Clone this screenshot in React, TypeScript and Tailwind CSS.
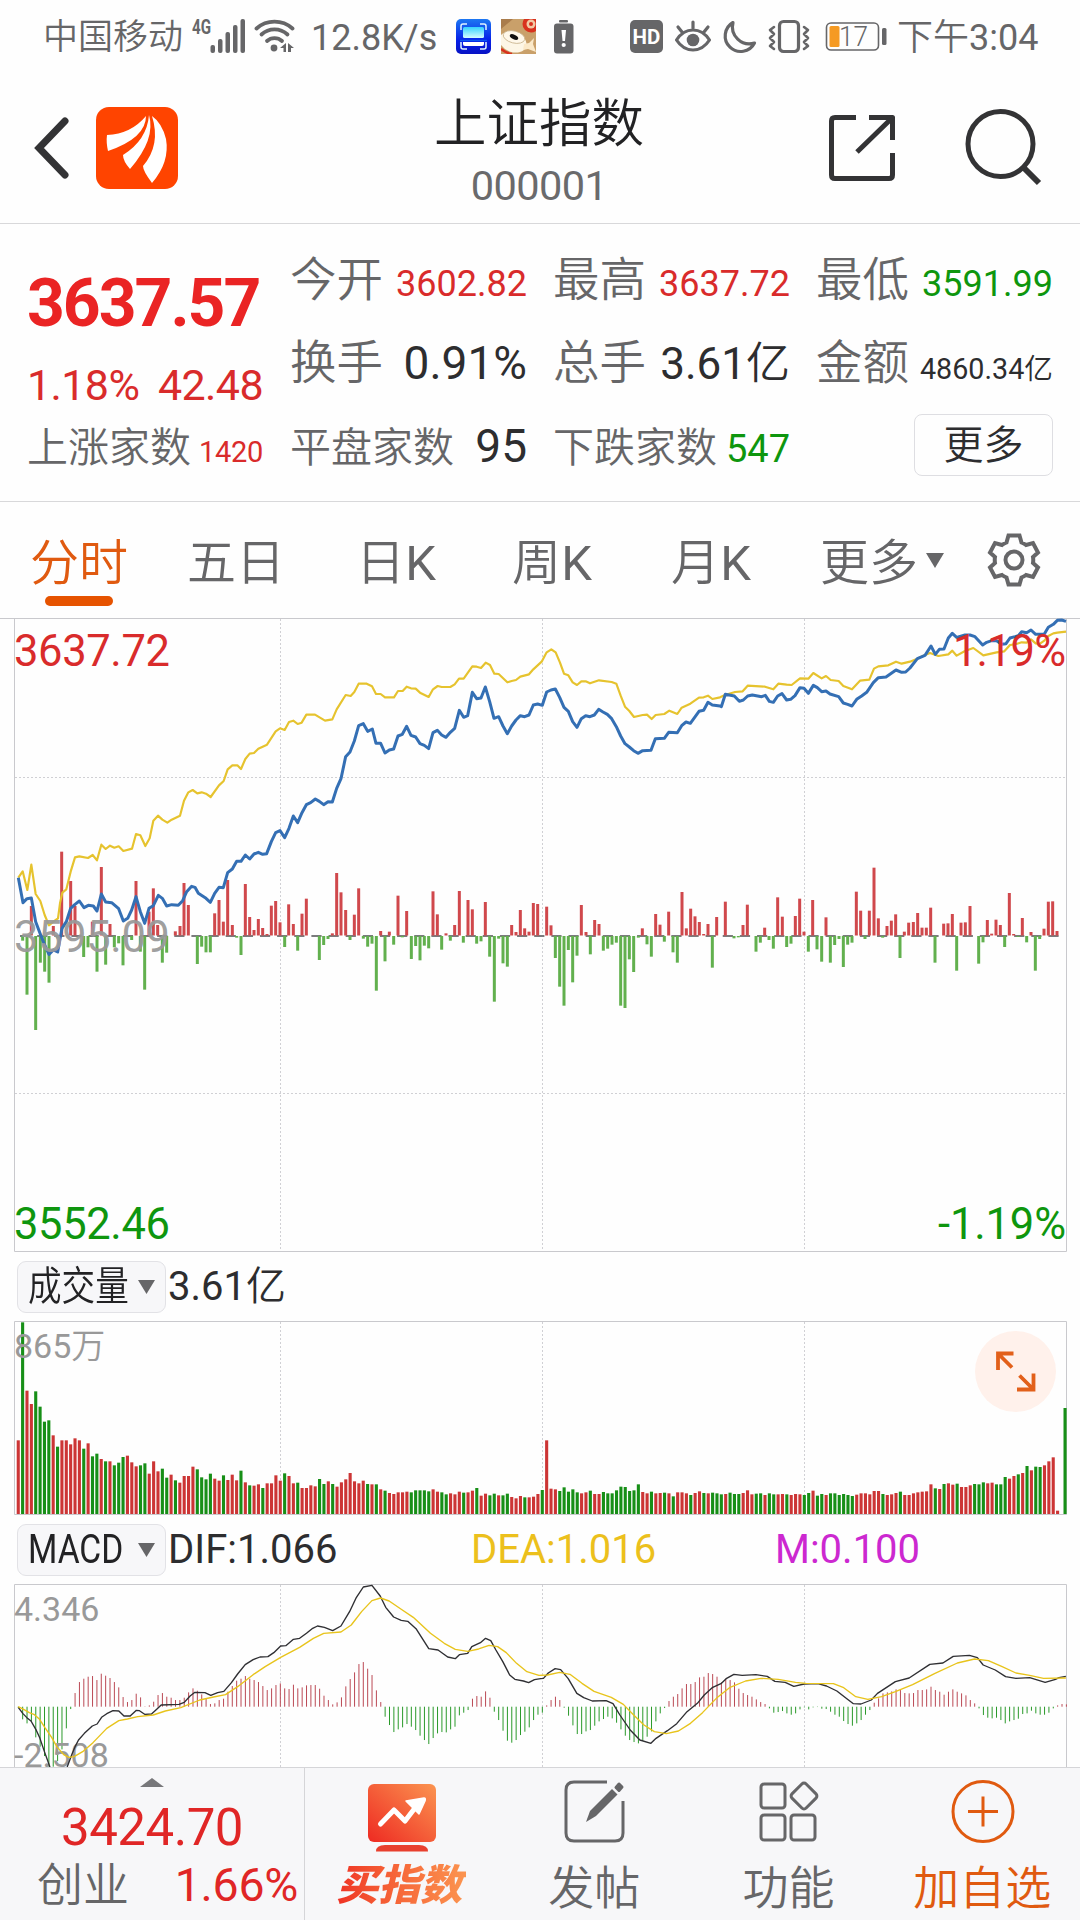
import React from 'react'

const RED = '#d92b2b'
const GREEN = '#0e960e'

// one sample per trading minute
const STEP = 4.367
const FIRST_X = 18.3

const priceLine =
  '55,803 69,878 81,866 94,864 107,935 120,970 131,998 147,1033 160,1020 173,1026 186,955 199,935 212,895 225,883 238,873 252,893 265,886 280,888 291,903 304,852 317,876 335,878 356,896 370,933 383,925 395,900 408,860 421,905 434,940 447,895 460,887 475,856 487,865 500,888 515,884 535,886 548,872 560,845 575,829 585,832 595,850 618,865 631,877 644,850 657,832 670,833 683,788 697,777 710,754 723,754 736,735 749,747 762,732 775,727 788,733 800,731 814,695 827,668 840,662 854,683 867,655 880,618 893,638 906,608 919,584 932,578 946,567 958,574 971,584 984,575 997,576 1010,535 1023,506 1037,440 1050,426 1063,393 1076,347 1090,341 1103,364 1117,357 1128,400 1142,400 1155,429 1168,420 1181,417 1194,378 1207,373 1220,349 1233,376 1247,381 1260,401 1273,406 1286,416 1299,368 1312,361 1325,375 1338,382 1351,367 1364,355 1378,301 1391,322 1403,317 1417,247 1430,266 1443,264 1456,231 1469,275 1482,325 1496,320 1509,348 1522,371 1535,348 1548,330 1561,317 1574,320 1587,315 1600,285 1613,282 1627,286 1640,246 1653,240 1666,237 1679,262 1692,292 1705,304 1718,335 1731,352 1744,326 1757,317 1770,320 1783,315 1796,298 1809,306 1822,313 1835,326 1849,350 1862,378 1875,401 1888,411 1901,422 1914,430 1928,422 1953,421 1966,386 1993,385 2006,367 2032,368 2045,347 2058,336 2071,340 2084,322 2097,304 2111,301 2124,277 2137,285 2160,288 2164,290 2176,253 2203,258 2218,274 2230,270 2243,258 2257,255 2285,260 2296,256 2308,274 2320,277 2333,258 2346,251 2360,270 2372,268 2385,257 2400,233 2412,235 2425,250 2440,226 2452,233 2465,245 2478,243 2490,252 2516,260 2530,279 2543,283 2556,288 2570,268 2585,258 2600,247 2620,218 2635,203 2658,201 2688,180 2705,187 2717,186 2730,174 2752,146 2775,136 2793,108 2806,133 2818,118 2832,117 2845,84 2857,70 2870,82 2895,75 2910,75 2925,80 2948,105 2960,97 2975,92 2990,92 3005,103 3018,101 3030,84 3045,80 3055,77 3065,65 3080,68 3093,60 3107,73 3133,72 3145,52 3160,43 3172,31 3185,30 3198,34'

const averageLine =
  '55,803 68,784 82,840 94,764 107,852 121,873 134,915 147,946 160,935 174,925 180,880 187,848 199,838 212,785 225,742 238,739 264,744 278,735 291,751 304,704 317,717 330,707 343,713 356,709 370,723 396,716 408,672 421,676 436,708 449,685 460,632 474,617 487,629 502,638 515,629 540,617 552,572 565,547 578,540 592,550 605,547 618,551 632,561 657,526 671,513 683,478 697,466 712,466 723,477 736,447 749,431 762,429 775,416 801,404 827,364 840,355 854,360 867,336 880,332 893,342 905,338 919,314 945,314 975,332 997,328 1010,298 1037,255 1052,258 1063,246 1076,221 1100,221 1116,229 1128,252 1142,252 1155,262 1182,262 1194,243 1208,243 1220,230 1233,235 1247,236 1260,248 1286,261 1299,238 1313,228 1325,231 1351,231 1364,223 1377,206 1391,206 1417,169 1430,170 1443,174 1457,158 1470,165 1483,191 1496,192 1522,217 1535,213 1548,210 1561,200 1587,193 1600,178 1625,155 1640,127 1654,118 1667,127 1680,158 1692,191 1705,196 1718,217 1731,225 1744,214 1757,214 1770,220 1797,211 1835,216 1849,221 1862,257 1875,290 1888,303 1902,321 1928,315 1941,314 1955,327 1967,315 1993,312 2008,302 2032,312 2045,293 2071,281 2097,263 2111,262 2124,257 2137,267 2160,262 2175,255 2205,246 2228,244 2243,227 2295,230 2320,238 2335,221 2360,224 2375,225 2400,205 2425,206 2440,189 2465,205 2478,198 2492,210 2516,213 2530,228 2556,238 2580,212 2608,209 2622,176 2635,169 2665,166 2688,155 2705,161 2730,155 2752,146 2775,135 2790,129 2815,138 2845,133 2857,122 2870,137 2895,123 2920,114 2950,136 2990,127 3013,124 3030,105 3045,103 3065,97 3080,98 3093,88 3107,100 3120,101 3133,92 3145,78 3160,70 3172,68 3198,65'

// bars round the previous close: x and the y of the bar's free end
const deltaBars: [number, number][] = [
  [94, 888], [160, 948], [185, 725], [212, 813], [225, 888], [277, 935], [304, 771], [330, 942], [408, 813], [447, 905],
  [460, 835], [473, 945], [526, 964], [540, 948], [552, 819], [565, 885], [644, 910], [657, 870], [670, 935], [683, 810],
  [697, 945], [736, 822], [749, 921], [762, 960], [775, 927], [788, 954], [801, 972], [814, 887], [827, 873], [840, 937],
  [866, 883], [880, 942], [906, 911], [919, 866], [997, 970], [1010, 789], [1023, 847], [1037, 900], [1063, 914], [1076, 835],
  [68, 992], [81, 1154], [107, 1260], [121, 1058], [134, 1085], [147, 1118], [173, 985], [251, 1041], [264, 1012], [291, 1085],
  [317, 1064], [343, 1012], [356, 1000], [369, 1066], [395, 990], [421, 1025], [434, 1139], [487, 1058], [500, 1028], [592, 1062],
  [605, 1010], [618, 1027], [631, 1027], [710, 983], [723, 1035], [854, 1011], [893, 1022], [958, 1050], [971, 1005], [984, 987],
  [1050, 990], [1142, 963], [1168, 965], [1194, 857], [1220, 903], [1299, 844], [1312, 913], [1338, 970], [1364, 945], [1378, 843],
  [1404, 870], [1417, 898], [1456, 876], [1535, 945], [1548, 966], [1561, 900], [1574, 955], [1587, 965], [1600, 879], [1613, 882],
  [1640, 890], [1653, 946], [1744, 885], [1758, 966], [1784, 930], [1797, 942], [1927, 955], [1967, 912], [1980, 944], [2006, 905],
  [2046, 846], [2059, 955], [2072, 896], [2085, 919], [2098, 936], [2111, 972], [2124, 942], [2150, 921], [1090, 986], [1103, 1010],
  [1116, 1001], [1129, 1142], [1155, 1054], [1181, 1004], [1207, 982], [1234, 1047], [1247, 1008], [1260, 1051], [1273, 1007], [1286, 1015],
  [1325, 1019], [1351, 992], [1390, 998], [1430, 1001], [1443, 994], [1469, 1040], [1483, 1175], [1496, 986], [1509, 1060], [1522, 1070],
  [1666, 1044], [1679, 1130], [1692, 1187], [1705, 1020], [1718, 1117], [1731, 1037], [1771, 1033], [1810, 1022], [1823, 1016], [1836, 1004],
  [1849, 998], [1862, 1187], [1875, 1194], [1888, 1048], [1901, 1086], [1915, 983], [1941, 1003], [1954, 1040], [1993, 995], [2019, 1027],
  [2032, 1058], [2137, 1073], [2176, 875], [2229, 945], [2242, 884], [2294, 953], [2333, 862], [2347, 920], [2386, 918], [2399, 866],
  [2412, 965], [2438, 870], [2478, 922], [2569, 845], [2582, 902], [2608, 902], [2622, 773], [2635, 925], [2661, 948], [2674, 932],
  [2687, 913], [2713, 965], [2726, 938], [2740, 936], [2753, 909], [2766, 953], [2779, 953], [2792, 893], [2831, 941], [2844, 940],
  [2857, 912], [2883, 938], [2896, 937], [2910, 888], [2962, 930], [2975, 971], [2988, 929], [3001, 945], [3028, 849], [3041, 972],
  [3067, 924], [3093, 966], [3132, 956], [3145, 875], [3158, 874], [3171, 963], [2202, 985], [2215, 982], [2268, 1025], [2281, 998],
  [2307, 990], [2320, 1016], [2360, 1011], [2373, 1001], [2425, 1025], [2451, 1018], [2465, 1055], [2491, 1058], [2504, 1005], [2517, 987],
  [2530, 1071], [2543, 1004], [2556, 998], [2595, 987], [2648, 983], [2700, 1044], [2805, 1058], [2870, 1082], [2936, 1061], [2949, 997],
  [3014, 1011], [3054, 981], [3080, 997], [3106, 1082], [3119, 987],
]

// turnover per minute, negative when the minute closed lower
const volumes = [
  221, -575, 370, 330, -368, -322, -277, -281, 236, -202, 221, 221, 209, 227, 221, -196, 212, -173, -181, 165,
  -158, 158, -146, -154, -171, 175, 155, 143, -146, -152, 121, 158, 128, -136, -109, 118, -101, 94, 114, 114,
  142, -134, -110, -104, -121, 106, 100, -116, 102, 118, 101, -130, 95, -86, 85, 89, -78, 92, 92, 116,
  100, -122, 114, 92, -94, 78, 78, 86, 83, -105, -90, 98, -90, 82, 95, 104, 123, 98, 92, 100,
  -90, 89, -89, 74, -70, 63, 60, 65, 65, 67, -65, -71, -71, -71, -68, 74, 67, -65, -59, 62,
  59, 67, -64, 65, 70, -78, 55, 61, -56, -61, 56, -56, -61, 51, 47, 54, -50, 50, 52, 60,
  -72, 221, 76, 74, -69, -80, -67, -74, -65, 62, 65, -70, 60, 60, -66, -62, -62, -71, -82, -81,
  -69, -71, -89, 66, 62, -67, 62, 63, -64, 62, -53, 65, 65, 62, -57, 63, 68, -63, 62, -64,
  -62, -59, 60, -64, -60, -60, 63, 71, 59, -61, -62, 57, -62, -59, 59, 60, -59, 57, 60, 59,
  -57, -63, 70, -55, -60, 57, -62, -62, -57, -60, -57, -54, 58, 62, 62, 59, 69, 69, -60, 57,
  59, 63, -67, 57, 57, 62, 65, 67, 68, 89, -77, 75, -90, 92, 88, -91, 81, 81, 86, -90,
  -89, -95, 92, 94, -89, -89, -111, 106, 114, -119, 123, -144, 131, -142, -141, 146, 158, 170, 10, 0,
  -318,
]

const macdBars = [
  -3, -38, -50, -45, -92, -120, -148, -180, -180, -163, -128, -65, -7, 41, 74, 84, 90, 92, 80, 99,
  93, 86, 74, 58, 29, 14, 20, 39, 28, 1, 4, 15, 35, 41, 30, 27, 20, 20, 27, 43,
  55, 48, 37, 23, 8, 10, 20, 24, 45, 62, 78, 84, 92, 84, 80, 74, 62, 50, 55, 65,
  70, 55, 53, 66, 55, 58, 64, 65, 65, 54, 33, 20, 7, 13, 28, 61, 83, 103, 128, 134,
  114, 95, 49, 14, -30, -55, -76, -68, -62, -52, -60, -70, -87, -100, -112, -94, -80, -76, -77, -68,
  -60, -26, -18, -10, 24, 32, 30, 46, 27, -15, -40, -72, -102, -108, -100, -85, -75, -62, -40, -24,
  -18, 4, 20, 30, 20, -3, -27, -56, -82, -82, -74, -70, -57, -44, -37, -30, -35, -48, -68, -87,
  -100, -106, -110, -102, -90, -74, -44, -20, -4, 17, 30, 38, 55, 68, 68, 74, 88, 90, 101, 98,
  90, 73, 84, 80, 73, 54, 41, 35, 30, 22, 14, 8, -5, -18, -16, -13, -20, -24, -20, -8,
  -2, -8, -2, -1, -6, -7, -15, -24, -30, -43, -52, -57, -50, -40, -24, -10, 12, 25, 40, 43,
  46, 52, 52, 41, 40, 41, 50, 50, 52, 60, 50, 45, 36, 45, 52, 45, 40, 34, 20, 10,
  -5, -25, -33, -35, -33, -40, -50, -44, -40, -36, -22, -20, -12, -20, -24, -24, -18, -5, 4, 8,
  7,
]

const difLine =
  '53,562 66,580 78,593 90,603 104,628 116,655 129,695 145,741 158,775 178,775 195,741 210,700 218,680 228,660 245,640 268,618 282,612 295,592 310,581 328,572 345,573 360,588 378,588 396,571 405,572 420,583 440,582 455,568 468,555 520,553 535,547 552,528 566,517 595,518 612,526 632,518 650,514 672,488 690,462 712,434 735,419 755,411 778,410 795,398 815,378 830,377 852,358 870,355 890,340 908,325 922,318 942,322 966,332 990,318 1015,275 1035,232 1055,201 1080,196 1104,228 1120,262 1143,291 1165,301 1184,304 1208,326 1245,386 1272,390 1300,411 1322,416 1334,404 1358,400 1370,380 1395,368 1410,355 1425,362 1440,390 1460,425 1480,465 1495,478 1520,483 1535,488 1552,479 1570,476 1578,475 1592,459 1612,446 1628,449 1650,476 1675,520 1695,533 1720,543 1760,542 1780,551 1800,585 1830,630 1858,660 1890,670 1905,655 1938,632 1965,611 1995,575 2025,550 2045,525 2068,503 2095,490 2110,475 2131,463 2155,466 2195,464 2228,469 2250,484 2280,487 2305,499 2335,492 2375,491 2400,498 2430,513 2460,537 2478,551 2500,552 2530,540 2548,520 2600,485 2640,474 2700,433 2738,429 2768,409 2815,406 2838,413 2855,435 2890,450 2920,470 2950,475 2990,473 3035,487 3065,478 3075,473 3095,469'

const deaLine =
  '53,560 70,569 85,578 100,584 115,598 130,622 150,652 165,680 185,704 200,712 215,710 240,695 270,668 310,625 345,602 370,597 400,590 445,585 480,573 525,563 580,540 620,531 655,524 690,500 735,464 770,440 815,412 870,382 910,355 940,340 990,336 1020,315 1050,275 1080,242 1105,234 1130,243 1165,268 1200,292 1250,340 1290,370 1322,388 1358,394 1390,387 1420,376 1445,380 1470,398 1500,430 1530,455 1565,466 1590,465 1625,457 1655,463 1690,490 1725,514 1775,532 1810,553 1840,585 1870,615 1900,635 1935,641 1970,633 2005,610 2040,578 2080,535 2120,502 2165,483 2210,475 2260,478 2310,487 2340,490 2420,491 2450,503 2485,530 2520,538 2560,530 2600,515 2650,494 2715,460 2780,429 2830,417 2870,422 2910,440 2950,459 2990,466 3030,475 3095,474'

const quotes = [
  [
    { label: '今开', value: '3602.82', style: 'text-[36px] text-[#d92b2b]' },
    { label: '最高', value: '3637.72', style: 'text-[36px] text-[#d92b2b]' },
    { label: '最低', value: '3591.99', style: 'text-[36px] text-[#0e960e]' },
  ],
  [
    { label: '换手', value: '0.91%', style: 'text-[46px] text-[#2d2d2f]' },
    { label: '总手', value: '3.61', unit: '亿', style: 'text-[44px] text-[#2d2d2f]' },
    { label: '金额', value: '4860.34', unit: '亿', style: 'text-[28.700px] text-[#2d2d2f]' },
  ],
]

const GridLines = ({ height }: { height: number }) => (
  <g stroke="#d0d0d4" strokeWidth="1" strokeDasharray="2 2">
    {[280.5, 542.5, 804.5].map((x) => (
      <line key={x} x1={x} x2={x} y1={0} y2={height} />
    ))}
  </g>
)

const StatusBar = () => (
  <div className="flex h-[72px] shrink-0 items-center pl-[43px] text-[35px] leading-none text-[#666668]">
    <span className="w-[147px] whitespace-nowrap pt-[3px] font-[350]">中国移动</span>
    <svg width="110" height="72" viewBox="190 0 110 72" fill="#666668">
      <text x="192" y="34" fontSize="20" fontWeight="700" textLength="19" lengthAdjust="spacingAndGlyphs">4G</text>
      <rect x="210.500" y="45" width="4.500" height="8" rx="2" />
      <rect x="218" y="39" width="4.500" height="14" rx="2" />
      <rect x="225.500" y="32" width="4.500" height="21" rx="2" />
      <rect x="233" y="25" width="4.500" height="28" rx="2" />
      <rect x="240.500" y="19" width="4.500" height="34" rx="2" />
      <g fill="none" stroke="#666668" strokeWidth="3.800" strokeLinecap="round">
        <path d="M256.500 28.500a27 27 0 0 1 36 0" />
        <path d="M261.500 34.500a19 19 0 0 1 26 0" />
        <path d="M267 41a11 11 0 0 1 15 0" />
      </g>
      <circle cx="274" cy="48" r="3.400" />
      <path d="M280 48l6-5v9h-2.500v-4zM288 43l6 5h-3v4h-3z" />
    </svg>
    <span className="ml-[11px] w-[126px] whitespace-nowrap pt-[3px] text-[36px]">12.8K/s</span>
    <svg className="ml-[19px]" width="120" height="72" viewBox="456 0 120 72">
      <defs>
        <linearGradient id="scan" x1="0" x2="0" y1="0" y2="1">
          <stop offset="0" stopColor="#1d78f2" />
          <stop offset="0.600" stopColor="#0620e8" />
          <stop offset="1" stopColor="#0712c4" />
        </linearGradient>
        <linearGradient id="page" x1="0" x2="0" y1="0" y2="1">
          <stop offset="0" stopColor="#35d3ff" />
          <stop offset="1" stopColor="#d5fbff" />
        </linearGradient>
        <clipPath id="catClip">
          <rect x="501" y="19" width="35" height="35" />
        </clipPath>
      </defs>
      <rect x="456" y="19" width="35" height="35" rx="5" fill="url(#scan)" />
      <path d="M461 30v-4q0-2 2-2h4M480 24h4q2 0 2 2v4M461 42v5q0 2 2 2h4M480 49h4q2 0 2-2v-5" fill="none" stroke="#dff4ff" strokeWidth="1.500" />
      <rect x="463" y="27" width="21" height="11" rx="1.500" fill="url(#page)" />
      <path d="M460 40.500h27" stroke="#0a56f0" strokeWidth="1.500" />
      <path d="M463 42h21v2q0 2-2 2h-17q-2 0-2-2z" fill="#fff" />
      <g clipPath="url(#catClip)">
        <rect x="501" y="19" width="35" height="35" fill="#c9a06a" />
        <path d="M501 19h12l-12 10z" fill="#a97c4c" />
        <circle cx="531" cy="24" r="8.500" fill="#d8321e" />
        <circle cx="531" cy="24" r="4.500" fill="#f2c9a4" />
        <circle cx="531" cy="24" r="2" fill="#d8321e" />
        <ellipse cx="513" cy="42" rx="14" ry="10" transform="rotate(20 513 42)" fill="#fdf6e6" />
        <path d="M524 44l5-1 5-5-1 6 3 8-8-3-5 1z" fill="#fbe9c9" />
        <ellipse cx="514" cy="37" rx="11" ry="6" transform="rotate(14 514 37)" fill="#fff8ea" stroke="#c8b28c" strokeWidth="0.800" />
        <ellipse cx="514" cy="37" rx="4.500" ry="2.300" transform="rotate(25 514 37)" fill="#111" />
        <path d="M501 49q5 4 11 5" stroke="#d8321e" strokeWidth="2.500" fill="none" />
      </g>
      <rect x="559" y="20" width="9" height="2.500" rx="1" fill="#666668" />
      <rect x="554" y="23.500" width="19.500" height="30" rx="3" fill="#666668" />
      <path d="M561.500 30h4.500l-1 11h-2.500z" fill="#fff" />
      <circle cx="563.700" cy="45" r="2.100" fill="#fff" />
    </svg>
    <svg className="ml-[52px]" width="262" height="72" viewBox="628 0 262 72" fill="#666668">
      <rect x="630" y="20" width="33" height="33" rx="5" />
      <text x="646.500" y="44" textAnchor="middle" fontSize="20.500" fontWeight="700" fill="#fff">HD</text>
      <g fill="none" stroke="#666668" strokeWidth="3.200" strokeLinecap="round" strokeLinejoin="round">
        <path d="M676.500 40q6.500-10 16.500-10t16.500 10q-6.500 10-16.500 10t-16.500-10z" />
        <path d="M693 22v6M678 27l4 5M708 27l-4 5" />
        <path d="M733 22.500a15.500 15.500 0 1 0 21.500 20.500a17 17 0 0 1-21.500-20.500z" />
        <rect x="779.500" y="21.500" width="19" height="30" rx="4" />
        <path d="M774 27l-4 3 4 4-4 4 4 4-4 4 4 3M804 27l4 3-4 4 4 4-4 4 4 4-4 3" strokeWidth="2.600" />
      </g>
      <circle cx="693" cy="40" r="6.300" />
      <rect x="826.500" y="23" width="52" height="27" rx="4.500" fill="none" stroke="#666668" strokeWidth="1.600" />
      <rect x="829.500" y="26" width="10" height="21" rx="1.500" fill="#f59a23" />
      <rect x="882" y="28" width="4.500" height="17" rx="1.500" />
      <text x="839" y="46" fontSize="28" fontWeight="300" textLength="29" lengthAdjust="spacingAndGlyphs">17</text>
    </svg>
    <span className="ml-[7px] flex items-baseline whitespace-nowrap pt-[4px] text-[36px]">
      <span className="font-[350]">下午</span>3:04
    </span>
  </div>
)

const Header = () => (
  <header className="flex h-[152px] shrink-0 items-center border-b border-[#d8d8da] pl-[33px] pr-[32px]">
    <div className="flex w-[359px] items-center">
      <svg width="36" height="64" viewBox="0 0 36 64" fill="none" stroke="#333335" strokeWidth="7" strokeLinecap="round">
        <path d="M32 5L6 32l26 27" />
      </svg>
      <svg className="ml-[27px]" width="82" height="82" viewBox="0 0 82 82">
        <rect width="82" height="82" rx="13" fill="#ff4400" />
        <path d="M11 28Q35 27 50 9Q50 31 12 44Q10 35 11 28z" fill="#fff" />
        <path d="M53 8Q60 32 34 62Q27 54 27 48Q51 33 53 8z" fill="#fff" />
        <path d="M56 9Q66 16 70 32Q74 55 56 76Q47 64 47 59Q65 38 56 9z" fill="#fff" />
      </svg>
    </div>
    <div className="flex w-[294px] flex-col items-center pt-[4px]">
      <h1 className="h-[67px] whitespace-nowrap text-[52.500px] font-[350] leading-[56px] text-[#222224]">上证指数</h1>
      <span className="h-[40px] text-[41.500px] leading-[46px] tracking-[-0.600px] text-[#6a6a6c]">000001</span>
    </div>
    <div className="flex flex-1 justify-end gap-[58px] pb-[2px]">
      <svg width="84" height="84" viewBox="822 105 84 84" fill="none" stroke="#333335" strokeWidth="5">
        <path d="M856 117.500H835q-3.500 0-3.500 3.500V175q0 3.500 3.500 3.500h54q3.500 0 3.500-3.500V153M869 117.500h23.500V140M891 119L857 152" strokeLinejoin="round" />
      </svg>
      <svg width="84" height="84" viewBox="964 105 84 84" fill="none" stroke="#333335" strokeWidth="5">
        <circle cx="1000.500" cy="144" r="32.500" />
        <path d="M1023 167l16 16" strokeWidth="6" />
      </svg>
    </div>
  </header>
)

const QuotePanel = () => (
  <section className="flex h-[278px] shrink-0 gap-[27px] border-b border-[#d8d8da] px-[27px] pt-[15px]">
    <div className="w-[237px]">
      <div className="h-[119px] pt-[25px] text-[66px] font-bold leading-[80px] tracking-[-2px] text-[#ea2424]">3637.57</div>
      <div className="flex h-[49px] justify-between text-[43px] leading-[54px] tracking-[-0.600px] text-[#d92b2b]">
        <span>1.18%</span>
        <span>42.48</span>
      </div>
      <div className="flex h-[83px] items-baseline justify-between whitespace-nowrap leading-[83px]">
        <span className="text-[41px] font-[350] text-[#666668]">上涨家数</span>
        <span className="text-[29px] tracking-[-0.300px] text-[#d92b2b]">1420</span>
      </div>
    </div>
    <div className="flex-1">
      {quotes.map((row, i) => (
        <div key={i} className="flex gap-[26px]">
          {row.map((q) => (
            <div key={q.label} className="flex h-[83px] w-[237px] items-baseline justify-between whitespace-nowrap leading-[83px]">
              <span className="text-[46.500px] font-[350] text-[#666668]">{q.label}</span>
              <span className={q.style}>
                {q.value}
                {q.unit && <span className="font-[350]">{q.unit}</span>}
              </span>
            </div>
          ))}
        </div>
      ))}
      <div className="flex gap-[26px]">
        <div className="flex h-[83px] w-[237px] items-baseline justify-between whitespace-nowrap leading-[83px]">
          <span className="text-[41px] font-[350] text-[#666668]">平盘家数</span>
          <span className="text-[46px] text-[#2d2d2f]">95</span>
        </div>
        <div className="flex h-[83px] w-[237px] items-baseline justify-between whitespace-nowrap pt-[2px] leading-[83px]">
          <span className="text-[41px] font-[350] text-[#666668]">下跌家数</span>
          <span className="text-[38px] text-[#0e960e]">547</span>
        </div>
        <div className="flex w-[237px] justify-end pt-[9px]">
          <button className="h-[62px] w-[139px] rounded-[8px] border border-[#dedee2] pt-[2px] text-[40px] font-[350] leading-[58px] text-[#2d2d2f]">更多</button>
        </div>
      </div>
    </div>
  </section>
)

const Tabs = () => (
  <nav className="flex h-[116px] shrink-0 items-start whitespace-nowrap pt-[27px] text-[49px] font-[350] leading-[70px] text-[#666668]">
    <div className="flex w-[158px] flex-col items-center">
      <span className="text-[#e05a10]">分时</span>
      <span className="-mt-[3px] h-[10px] w-[68px] rounded-full bg-[#e65300]" />
    </div>
    <span className="w-[156px] text-center">五日</span>
    <span className="w-[164px] text-center">日<span className="font-normal">K</span></span>
    <span className="w-[148px] text-center">周<span className="font-normal">K</span></span>
    <span className="w-[170px] text-center">月<span className="font-normal">K</span></span>
    <span className="ml-[24px] w-[105px]">更多</span>
    <svg className="mt-[23px]" width="20" height="18" viewBox="0 0 20 18">
      <path d="M1 1h18L10 16z" fill="#666668" />
    </svg>
    <svg className="ml-[41px] mt-[3px]" width="56" height="56" viewBox="-28 -28 56 56" fill="none" stroke="#666668" strokeWidth="4">
      <path d="M-5.500 -24.500H5.500L7.500 -17.500Q10 -16.500 12 -15L19 -17L24 -7.500L19 -3Q19.500 0 19 3L24 7.500L19 17L12 15Q10 16.500 7.500 17.500L5.500 24.500H-5.500L-7.500 17.500Q-10 16.500 -12 15L-19 17L-24 7.500L-19 3Q-19.500 0 -19 -3L-24 -7.500L-19 -17L-12 -15Q-10 -16.500 -7.500 -17.500z" />
      <circle r="8.500" />
    </svg>
  </nav>
)

const PriceChart = () => (
  <svg className="block shrink-0" width="1080" height="634" viewBox="0 618 1080 634">
    <path d="M0 618.500H1080" stroke="#c9c9cd" />
    <path d="M14.500 618.500H1066.500V1251.500H14.500z" fill="none" stroke="#c9c9cd" />
    <g transform="translate(0 619)">
      <GridLines height={632} />
    </g>
    <path d="M15 777.500H1066M15 1093.500H1066" stroke="#d0d0d4" strokeDasharray="2 2" />
    <path d="M20 936H1064" stroke="#7b7b7d" strokeWidth="1.800" strokeDasharray="10.200 6.940" />
    {deltaBars.map(([x, y]) => {
      const up = y < 976
      const end = 610 + y / 3
      return (
        <rect
          key={x}
          x={x / 3 - 1.5}
          y={up ? end : 936}
          width={3}
          height={up ? Math.max(935.5 - end, 0.5) : end - 936}
          fill={up ? '#d0484c' : '#62b04e'}
        />
      )
    })}
    <g transform="translate(0 610) scale(0.33333)" fill="none" strokeLinejoin="round">
      <polyline points={averageLine} stroke="#e6c32e" strokeWidth="6.500" />
      <polyline points={priceLine} stroke="#346fb4" strokeWidth="9" />
    </g>
    <g fontSize="43.500">
      <text x="14" y="666" fill={RED} textLength="156">3637.72</text>
      <text x="14" y="952" fill="#999" fillOpacity="0.950" textLength="156">3595.09</text>
      <text x="14" y="1239" fill={GREEN} textLength="156">3552.46</text>
      <text x="1066" y="666" fill={RED} textAnchor="end" textLength="113">1.19%</text>
      <text x="1066" y="1239" fill={GREEN} textAnchor="end" textLength="128">-1.19%</text>
    </g>
  </svg>
)

const IndicatorButton = ({ name }: { name: string }) => (
  <button className="flex h-[52px] w-[149px] items-center justify-between rounded-[9px] border border-[#e2e2e6] bg-[#f7f7f9] pl-[10px] pr-[10px] leading-none text-[#222224]">
    <span className="w-[98px] origin-left scale-x-[0.84] whitespace-nowrap text-left">{name}</span>
    <svg className="shrink-0" width="17" height="14" viewBox="0 0 17 14">
      <path d="M0 0h17L8.500 14z" fill="#666668" />
    </svg>
  </button>
)

const VolumeChart = () => (
  <svg className="block shrink-0" width="1080" height="194" viewBox="0 1321 1080 194">
    <g transform="translate(0 1322)">
      <GridLines height={190} />
    </g>
    <path d="M14.500 1321.500H1066.500V1514.500H14.500z" fill="none" stroke="#c9c9cd" />
    {volumes.map((v, i) => (
      <rect key={i} x={Math.min(FIRST_X + i * STEP - 1.6, 1063.5)} y={1514 - Math.abs(v) / 3} width={3.1} height={Math.abs(v) / 3} fill={v > 0 ? '#cc3535' : '#178f17'} />
    ))}
    <text x="14" y="1358" fontSize="34" fill="#999">865<tspan fontWeight="350">万</tspan></text>
    <circle cx="1015.500" cy="1371.500" r="40.500" fill="#fff1eb" />
    <path d="M1013.500 1353.500H998V1370M999 1354.500l13 13M1017 1389.500h16.500V1373.500M1032.500 1388.500l-13-13" fill="none" stroke="#e2601a" strokeWidth="3.800" />
  </svg>
)

const MacdChart = () => (
  <svg className="block shrink-0" width="1080" height="183" viewBox="0 1584 1080 183">
    <g transform="translate(0 1585)">
      <GridLines height={182} />
    </g>
    <path d="M14.500 1780V1584.500H1066.500V1780" fill="none" stroke="#c9c9cd" />
    {macdBars.map((v, i) => (
      <rect key={i} x={FIRST_X + i * STEP - 0.5} y={v > 0 ? 1706.7 - v / 3 : 1706.7} width={1} height={Math.abs(v) / 3} fill={v > 0 ? '#bb4a55' : '#2b9a2b'} />
    ))}
    <text x="14" y="1621" fontSize="34" fill="#999">4.346</text>
    <text x="14" y="1767" fontSize="34" fill="#999">-2.508</text>
    <g transform="translate(0 1520) scale(0.34438 0.33333)" fill="none" strokeLinejoin="round" strokeWidth="4">
      <polyline points={difLine} stroke="#2f2f33" />
      <polyline points={deaLine} stroke="#e8c41c" />
    </g>
  </svg>
)

const BottomBar = () => (
  <footer className="flex h-[153px] shrink-0 border-t border-[#d5d5d8] bg-[#f7f7f9] text-[46px] leading-[56px] text-[#666668]">
    <div className="flex w-[305px] flex-col items-center border-r border-[#d5d5d8] pt-[10px]">
      <svg width="24" height="9" viewBox="0 0 24 9">
        <path d="M0 9L12 0l12 9z" fill="#77777a" />
      </svg>
      <span className="mt-[11px] text-[51px] leading-[60px] tracking-[-0.500px] text-[#e02626]">3424.70</span>
      <div className="-mt-px flex w-full items-baseline justify-between whitespace-nowrap pl-[37px] pr-[6px]">
        <span className="font-[350]">创业</span>
        <span className="text-[46.500px] tracking-[-0.300px] text-[#e02626]">1.66%</span>
      </div>
    </div>
    <div className="flex flex-1 flex-col items-center pt-[16px]">
      <svg width="68" height="70" viewBox="0 0 68 70">
        <defs>
          <linearGradient id="buy" x1="0" x2="1" y1="1" y2="0">
            <stop offset="0" stopColor="#ee2a22" />
            <stop offset="1" stopColor="#fb9450" />
          </linearGradient>
        </defs>
        <rect width="68" height="58" rx="6" fill="url(#buy)" />
        <path d="M8 67.500q0-6.500 9-6.500h34q9 0 9 6.500z" fill="#e8402f" />
        <path d="M12.500 40L26 26l11 11L50 20" fill="none" stroke="#fff" strokeWidth="5" strokeLinecap="round" strokeLinejoin="round" />
        <path d="M38 17l18-3q2 0 1 3l-6 13z" fill="#fff" stroke="#fff" strokeWidth="1.500" strokeLinejoin="round" />
      </svg>
      <span className="mr-[5px] mt-[4px] whitespace-nowrap bg-linear-to-r from-[#ee2a22] to-[#fb9450] bg-clip-text px-[4px] text-[42px] font-black italic text-transparent">买指数</span>
    </div>
    <div className="flex flex-1 flex-col items-center pt-[11px]">
      <svg className="mr-[2px]" width="64" height="66" viewBox="0 0 64 66" fill="none" stroke="#666668" strokeWidth="3">
        <path d="M44 3H11Q3 3 3 11V54q0 8 8 8H52q8 0 8-8V22" />
        <path d="M23 43l4-11L49 10l5.500 5.500L33 37z" fill="#666668" stroke="none" />
        <path d="M53 8.500l3-3.500 3 3-3 3.500z" fill="#666668" strokeLinejoin="round" />
      </svg>
      <span className="mr-[3px] mt-[15px] font-[350]">发帖</span>
    </div>
    <div className="flex flex-1 flex-col items-center pt-[11px]">
      <svg width="64" height="66" viewBox="0 0 64 66" fill="none" stroke="#666668" strokeWidth="3">
        <rect x="4" y="5" width="24" height="24" rx="3" />
        <rect x="4" y="36" width="24" height="25" rx="3" />
        <rect x="34" y="36" width="24" height="25" rx="3" />
        <rect x="37" y="7" width="20" height="20" rx="3" transform="rotate(45 47 17)" />
      </svg>
      <span className="mr-[2px] mt-[15px] font-[350]">功能</span>
    </div>
    <div className="flex flex-1 flex-col items-center pt-[11px] text-[#e05a10]">
      <svg width="64" height="66" viewBox="0 0 64 66" fill="none" stroke="#e05a10" strokeWidth="3">
        <circle cx="32" cy="32.500" r="30" />
        <path d="M32 17.500v30M17 32.500h30" />
      </svg>
      <span className="mr-[2px] mt-[15px] whitespace-nowrap font-[350]">加自选</span>
    </div>
  </footer>
)

const App = () => {
  return (
    <main className="flex h-[1920px] w-[1080px] flex-col overflow-hidden bg-[#fefefe] font-[Roboto,'Noto_Sans_CJK_SC',sans-serif]">
      <StatusBar />
      <Header />
      <QuotePanel />
      <Tabs />
      <PriceChart />
      <div className="flex h-[69px] shrink-0 items-center pl-[17px] text-[40px] font-[350] leading-none text-[#2d2d2f]">
        <IndicatorButton name="成交量" />
        <span className="ml-[2px]"><span className="font-normal">3.61</span>亿</span>
      </div>
      <VolumeChart />
      <div className="flex h-[69px] shrink-0 items-center pl-[17px] text-[40px] leading-none text-[#2d2d2f]">
        <IndicatorButton name="MACD" />
        <span className="ml-[2px] w-[303px]">DIF:1.066</span>
        <span className="w-[304px] text-[#ecc01c]">DEA:1.016</span>
        <span className="text-[#cc28d0]">M:0.100</span>
      </div>
      <MacdChart />
      <BottomBar />
    </main>
  )
}

export default App
